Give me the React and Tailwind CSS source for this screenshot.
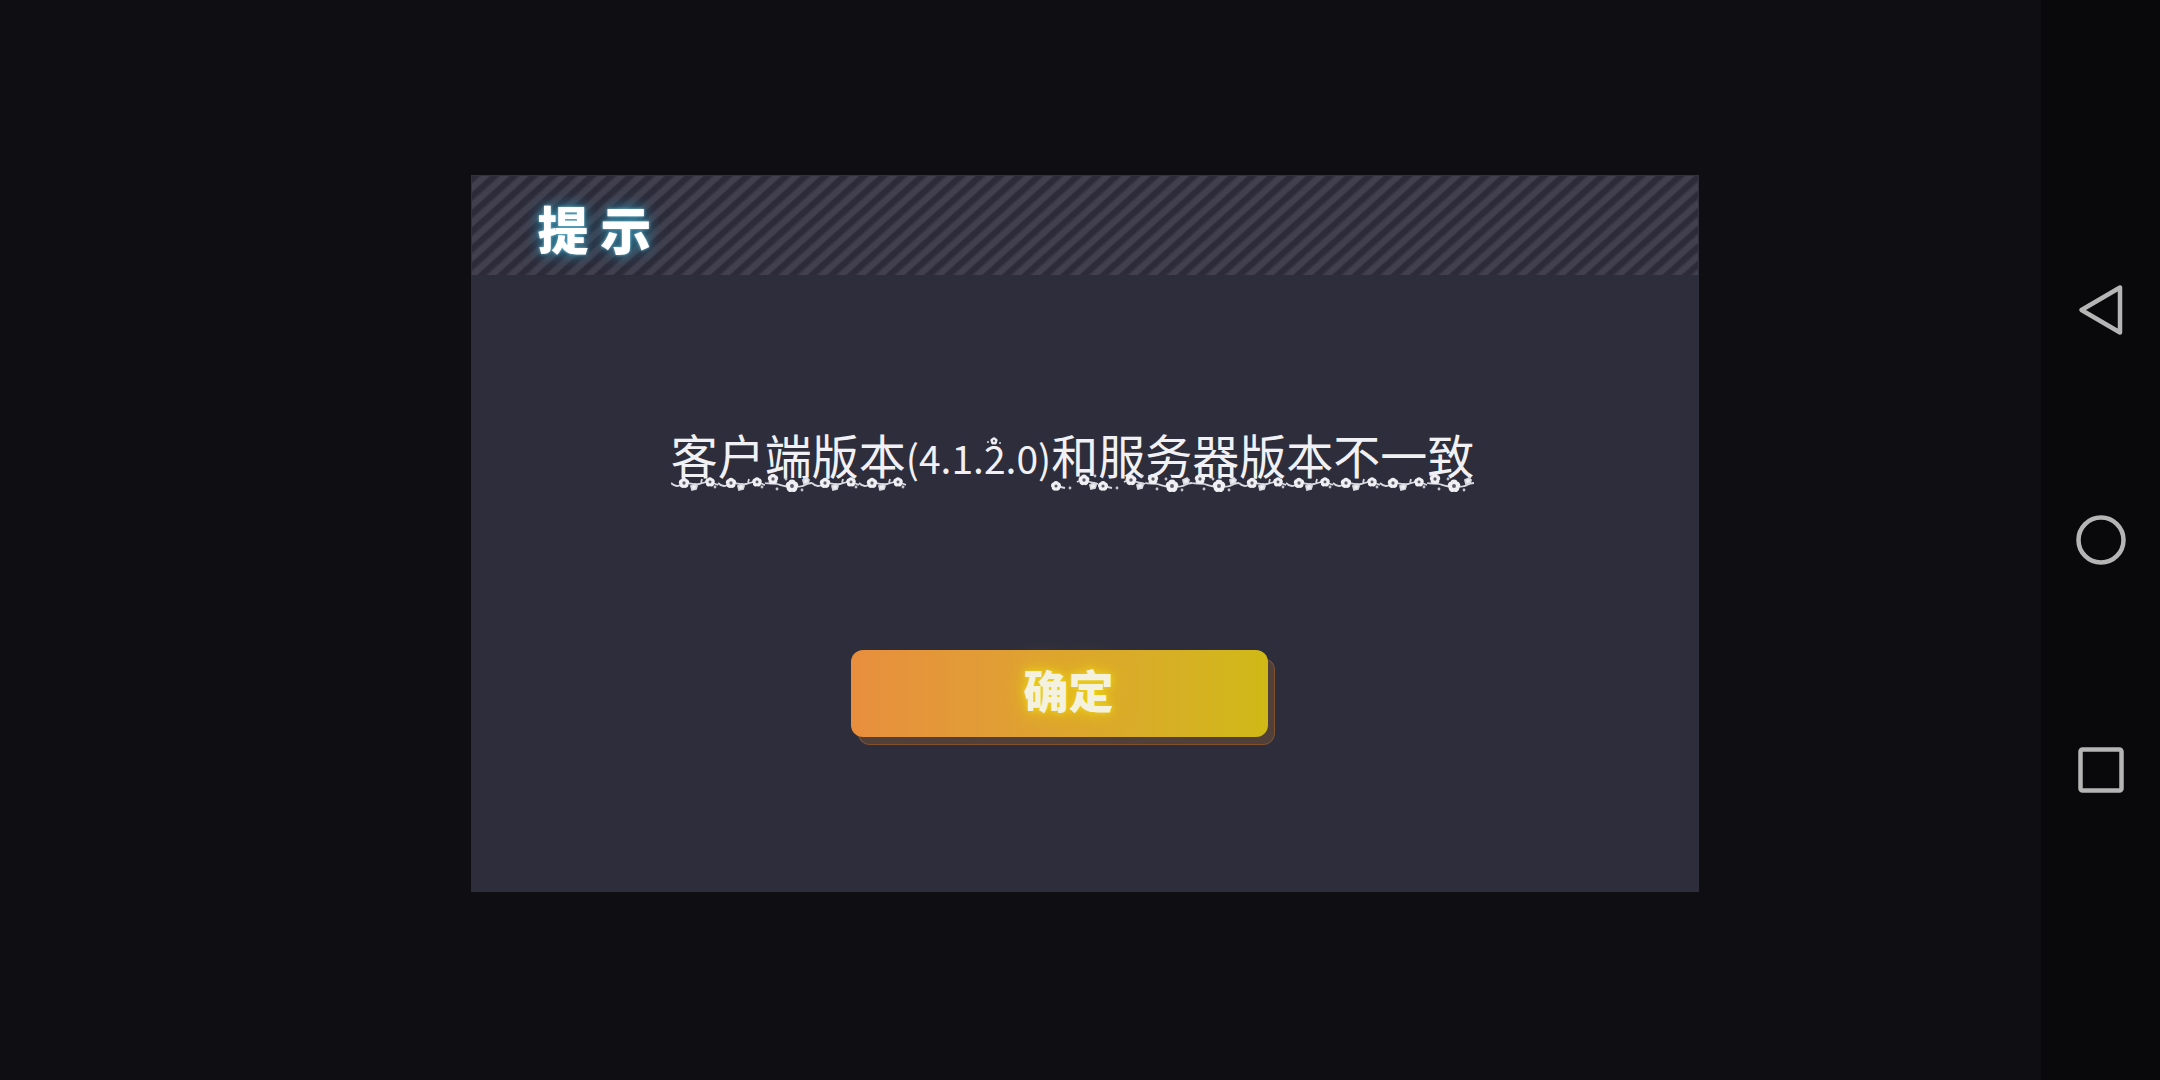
import React from 'react';

function Blossom({ x, y, r = 4 }) {
    return (
        <g transform={`translate(${x} ${y})`} stroke="none">
            {[0, 72, 144, 216, 288].map((a) => (
                <circle key={a} cx="0" cy={-r * 0.5} r={r * 0.6} transform={`rotate(${a})`} fill="#efeff4" />
            ))}
            <circle r={r * 0.34} fill="#5b5967" />
        </g>
    );
}

function Leaf({ x, y }) {
    return <path d={`M${x - 3} ${y - 1}l4-2 2 2-1 3-4 1z`} fill="#efeff4" />;
}

// One tile is as wide as one character of the message
const tiles = {
    vine: (
        <>
            <path d="M0 9c3 3 6 4 9 2l4-2c6 0 10 2 15 1s7-3 11-2 5 2 8 3M30 9l1-4" />
            <Blossom x={13} y={9} r={4.8} />
            <Blossom x={39} y={8} r={4.4} />
            <Leaf x={23} y={13} />
            <circle cx="44" cy="13" r="0.5" />
        </>
    ),
    branch: (
        <>
            <path d="M0 9c4 1 8 0 12 1s9 3 15 3 10 0 13-2 4-2 7-2" />
            <Blossom x={8} y={5} r={4.8} />
            <Blossom x={27} y={12} r={5.8} />
            <Leaf x={41} y={7} />
            <circle cx="12" cy="15" r="0.5" />
            <circle cx="21" cy="5" r="0.5" />
            <circle cx="37" cy="16" r="0.5" />
        </>
    ),
    sprig: (
        <>
            <path d="M5 12l9 2M26 8c3-2 6-2 9-1s8 2 12 3" />
            <Blossom x={5} y={12} r={4.6} />
            <Blossom x={33} y={6} r={5} />
            <Leaf x={42} y={12} />
            <circle cx="19" cy="14" r="0.5" />
            <circle cx="44" cy="2" r="0.5" />
        </>
    ),
};

function Garland({ pattern }) {
    return (
        <svg
            aria-hidden="true"
            className="absolute left-0 top-full -mt-2.5 h-5 w-full"
            viewBox={`0 0 ${pattern.length * 47} 20`}
            fill="none"
            stroke="#d8d8e0"
            strokeWidth="1.8"
        >
            {pattern.map((name, i) => (
                <g key={i} transform={`translate(${i * 47} 0)`}>{tiles[name]}</g>
            ))}
        </svg>
    );
}

export default function App() {
    return (
        <div className="flex min-h-screen bg-[#0f0e13] font-['Noto_Sans_CJK_SC',sans-serif]">
            <main className="flex flex-1 items-center justify-center pb-3.5 pl-32">
                <section role="dialog" aria-labelledby="dialog-title" className="w-full max-w-[1228px] bg-[#2e2d3b]">
                    <header className="flex h-[100px] items-center border border-b-0 border-[#33323f] bg-[repeating-linear-gradient(138deg,#2d2b39_0px,#2d2b39_4px,#42404e_7px,#42404e_11px,#2d2b39_13px)] pl-[66px] pt-1.5">
                        <h1
                            id="dialog-title"
                            className="text-[51px] font-black leading-none text-white [text-shadow:0_0_3px_#7fc4dc,0_0_12px_#2f7f9c,0_0_20px_#2b5f78]"
                        >
                            提 示
                        </h1>
                    </header>

                    <div className="flex flex-col items-center pb-[155px] pt-[149px]">
                        {/* Message */}
                        <p className="flex h-[60px] items-baseline pr-6 text-[47px] leading-[60px] text-[#f1f1f5]">
                            <span className="relative">
                                客户端版本
                                <Garland pattern={['vine', 'vine', 'branch', 'vine', 'vine']} />
                            </span>
                            <span className="relative text-[39px]">
                                (4.1.2.0)
                                <svg aria-hidden="true" className="absolute left-20 top-2 h-3 w-4" viewBox="0 0 16 12" fill="#d8d8e0">
                                    <Blossom x={8} y={6} r={3.4} />
                                    <circle cx="2" cy="7" r="1" />
                                    <circle cx="14" cy="8" r="1" />
                                </svg>
                            </span>
                            <span className="relative">
                                和服务器版本不一致
                                <Garland pattern={['sprig', 'sprig', 'branch', 'branch', 'vine', 'vine', 'vine', 'vine', 'branch']} />
                            </span>
                        </p>

                        <div className="mt-[166px] pr-[50px]">
                            <button
                                type="button"
                                className="h-[87px] w-[417px] rounded-xl bg-linear-to-r from-[#e88e3e] to-[#d0b916] pb-2 pl-[18px] text-[45px] font-black leading-none text-[#f5f1df] shadow-[7px_8px_0_-1px_#51403a,7px_8px_0_0_#83522a] [text-shadow:0_0_6px_#ecd01c,0_0_14px_#e8c41c,0_0_26px_#e0bc1c]"
                            >
                                确定
                            </button>
                        </div>
                    </div>
                </section>
            </main>

            {/* System navigation */}
            <nav className="flex w-[119px] flex-col items-center justify-center gap-[178px] bg-[#09090b] pb-px">
                <button type="button" aria-label="Back">
                    <svg className="size-[52px]" viewBox="0 0 52 52" fill="none" stroke="#b5b5b5" strokeWidth="4.5" strokeLinejoin="round">
                        <path d="M45 3.5v45L6.5 26z" />
                    </svg>
                </button>
                <button type="button" aria-label="Home">
                    <svg className="size-[52px]" viewBox="0 0 52 52" fill="none" stroke="#b5b5b5" strokeWidth="4.5">
                        <circle cx="26" cy="26" r="22.5" />
                    </svg>
                </button>
                <button type="button" aria-label="Recent apps">
                    <svg className="size-[52px]" viewBox="0 0 52 52" fill="none" stroke="#b5b5b5" strokeWidth="4.5">
                        <rect x="5.5" y="5.5" width="41" height="41" rx="2" />
                    </svg>
                </button>
            </nav>
        </div>
    );
}
